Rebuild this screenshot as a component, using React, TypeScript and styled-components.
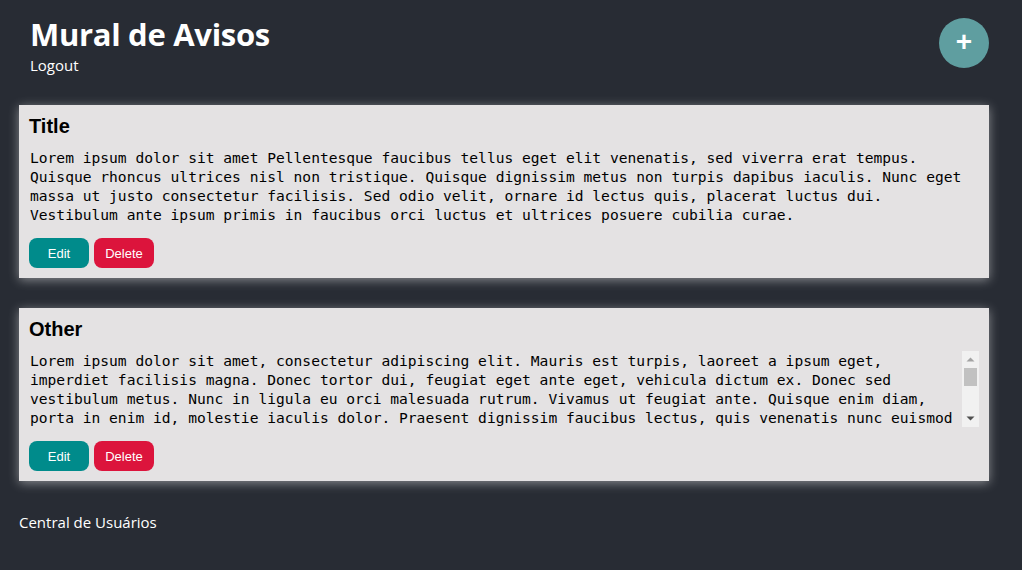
import React, { useLayoutEffect, useRef, useState } from 'react';
import styled, { createGlobalStyle } from 'styled-components';

interface Aviso {
  id: number;
  title: string;
  body: string;
}

const avisos: Aviso[] = [
  {
    id: 1,
    title: 'Title',
    body:
      'Lorem ipsum dolor sit amet Pellentesque faucibus tellus eget elit venenatis, sed viverra erat tempus. Quisque rhoncus ultrices nisl non tristique. Quisque dignissim metus non turpis dapibus iaculis. Nunc eget massa ut justo consectetur facilisis. Sed odio velit, ornare id lectus quis, placerat luctus dui. Vestibulum ante ipsum primis in faucibus orci luctus et ultrices posuere cubilia curae.'
  },
  {
    id: 2,
    title: 'Other',
    body:
      'Lorem ipsum dolor sit amet, consectetur adipiscing elit. Mauris est turpis, laoreet a ipsum eget, imperdiet facilisis magna. Donec tortor dui, feugiat eget ante eget, vehicula dictum ex. Donec sed vestibulum metus. Nunc in ligula eu orci malesuada rutrum. Vivamus ut feugiat ante. Quisque enim diam, porta in enim id, molestie iaculis dolor. Praesent dignissim faucibus lectus, quis venenatis nunc euismod sit amet. Curabitur vel ultricies nulla. Sed non erat et nibh lobortis finibus. Nam vehicula sem id augue placerat, a tincidunt ipsum porttitor.'
  }
];

const ScrollText: React.FC<{ text: string }> = ({ text }) => {
  const ref = useRef<HTMLDivElement>(null);
  const [overflow, setOverflow] = useState(false);

  useLayoutEffect(() => {
    const el = ref.current;
    if (el) setOverflow(el.scrollHeight > el.clientHeight + 1);
  }, [text]);

  return (
    <BodyRow>
      <CardBody ref={ref}>{text}</CardBody>
      {overflow && (
        <ScrollTrack>
          <ScrollArrow>
            <svg width="17" height="17" viewBox="0 0 17 17">
              <path d="M4.5 10.5h8l-4-4z" fill="#a3a3a3" />
            </svg>
          </ScrollArrow>
          <ScrollThumb />
          <ScrollSpacer />
          <ScrollArrow>
            <svg width="17" height="17" viewBox="0 0 17 17">
              <path d="M4.5 6.5h8l-4 4z" fill="#505050" />
            </svg>
          </ScrollArrow>
        </ScrollTrack>
      )}
    </BodyRow>
  );
};

const App: React.FC = () => {
  return (
    <>
      <GlobalStyle />
      <Page>
        <Header>
          <HeaderLeft>
            <PageTitle>Mural de Avisos</PageTitle>
            <LogoutLink>Logout</LogoutLink>
          </HeaderLeft>
          <AddButton aria-label="Novo aviso">+</AddButton>
        </Header>

        <List>
          {avisos.map((aviso) => (
            <Card key={aviso.id}>
              <CardTitle>{aviso.title}</CardTitle>
              <ScrollText text={aviso.body} />
              <Actions>
                <ActionButton variant="edit">Edit</ActionButton>
                <ActionButton variant="delete">Delete</ActionButton>
              </Actions>
            </Card>
          ))}
        </List>

        <Footer>Central de Usuários</Footer>
      </Page>
    </>
  );
};

export default App;

const GlobalStyle = createGlobalStyle`
  html, body {
    margin: 0;
    padding: 0;
    background-color: #282c34;
    min-height: 100%;
  }
  body {
    font-family: 'Open Sans', 'Noto Sans', sans-serif;
    color: #ffffff;
  }
`;

const Page = styled.div`
  padding: 0 33px 0 19px;
  min-height: 570px;
  box-sizing: border-box;
`;

const Header = styled.header`
  display: flex;
  justify-content: space-between;
  align-items: flex-start;
  padding: 14px 0 0 11px;
  height: 105px;
  box-sizing: border-box;
`;

const HeaderLeft = styled.div`
  display: flex;
  flex-direction: column;
`;

const PageTitle = styled.h1`
  margin: 0;
  font-size: 31px;
  font-weight: 700;
  line-height: 40px;
  letter-spacing: -0.3px;
`;

const LogoutLink = styled.span`
  font-size: 15px;
  line-height: 22px;
  cursor: pointer;
`;

const AddButton = styled.button`
  margin-top: 4px;
  width: 50px;
  height: 50px;
  border-radius: 50%;
  border: none;
  background-color: #5f9ea0;
  color: #ffffff;
  font-family: 'Liberation Sans', Arial, sans-serif;
  font-size: 28px;
  font-weight: 700;
  line-height: 1;
  padding: 0 0 2px;
  display: flex;
  align-items: center;
  justify-content: center;
  cursor: pointer;
`;

const List = styled.main`
  display: flex;
  flex-direction: column;
  gap: 30px;
`;

const Card = styled.section`
  background-color: #e4e2e3;
  padding: 10px;
  box-shadow: 0 2px 10px rgba(255, 255, 255, 0.45);
  display: flex;
  flex-direction: column;
`;

const CardTitle = styled.h2`
  margin: 0;
  color: #000000;
  font-family: 'Liberation Sans', Arial, sans-serif;
  font-size: 20px;
  font-weight: 700;
  line-height: 23px;
`;

const BodyRow = styled.div`
  display: flex;
  margin-top: 10px;
  max-height: 76px;
`;

const CardBody = styled.div`
  flex: 1;
  min-width: 0;
  color: #000000;
  font-family: 'DejaVu Sans Mono', 'Liberation Mono', monospace;
  font-size: 14.6px;
  line-height: 19px;
  max-height: 76px;
  overflow: hidden;
  padding: 0 2px 0 1px;
`;

const ScrollTrack = styled.div`
  width: 17px;
  flex-shrink: 0;
  height: 76px;
  background-color: #f1f1f1;
  display: flex;
  flex-direction: column;
`;

const ScrollArrow = styled.div`
  height: 17px;
  display: flex;
  align-items: center;
  justify-content: center;
  flex-shrink: 0;
`;

const ScrollThumb = styled.div`
  height: 18px;
  margin: 0 2px;
  background-color: #c1c1c1;
`;

const ScrollSpacer = styled.div`
  flex: 1;
`;

const Actions = styled.div`
  display: flex;
  gap: 5px;
  margin-top: 14px;
`;

interface ActionButtonProps {
  variant: 'edit' | 'delete';
}

const ActionButton = styled.button<ActionButtonProps>`
  width: 60px;
  height: 30px;
  border: none;
  border-radius: 8px;
  background-color: ${({ variant }) => (variant === 'edit' ? '#008b8b' : '#dc143c')};
  color: #ffffff;
  font-family: 'Liberation Sans', Arial, sans-serif;
  font-size: 13px;
  cursor: pointer;
`;

const Footer = styled.footer`
  margin-top: 31px;
  font-size: 15px;
  line-height: 20px;
`;
